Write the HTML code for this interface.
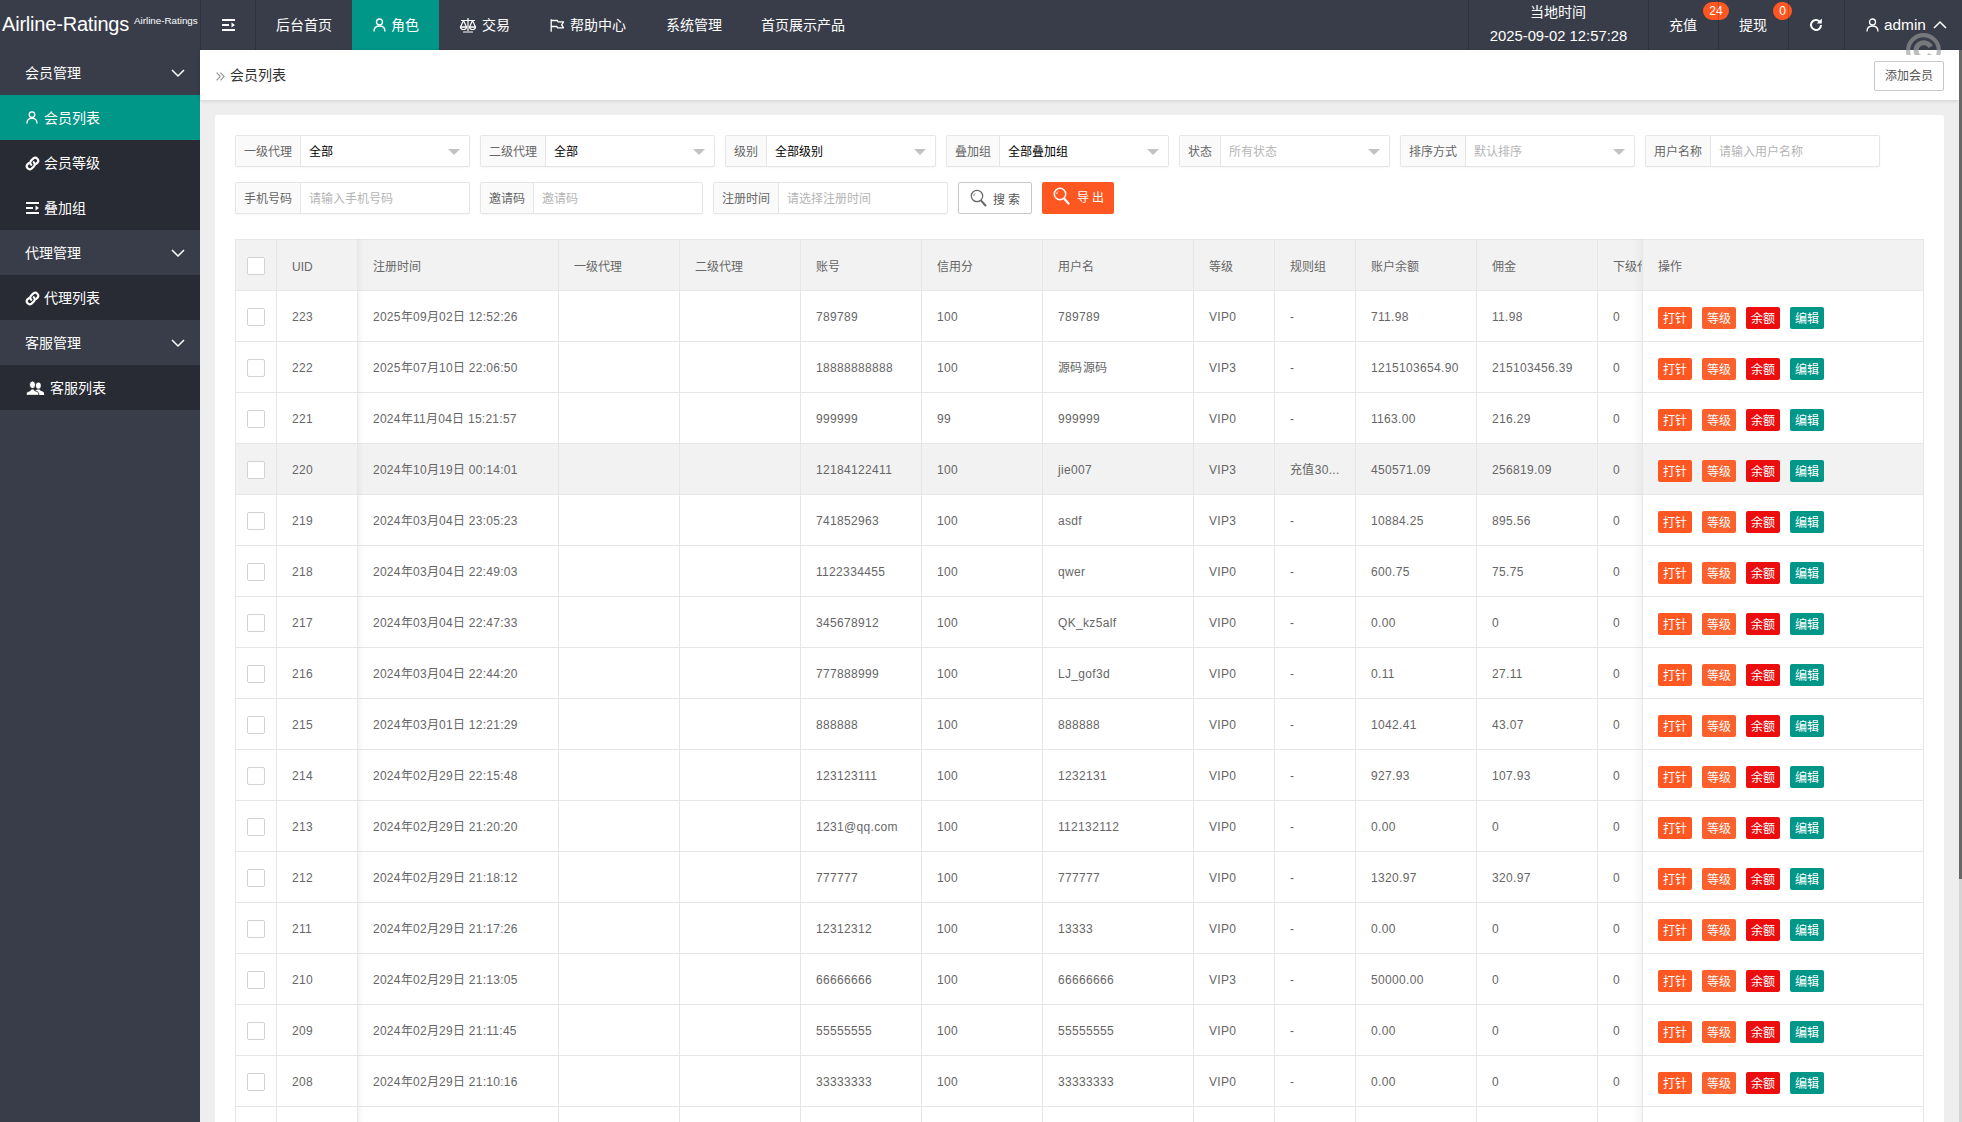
<!DOCTYPE html>
<html lang="zh-CN"><head><meta charset="utf-8"><title>会员列表</title>
<style>
*{box-sizing:border-box;margin:0;padding:0}
html,body{width:1962px;height:1122px;overflow:hidden}
body{font-family:"Liberation Sans",sans-serif;font-size:14px;color:#666;background:#eee;position:relative}
i{font-style:normal}
svg{display:block}
.abs{position:absolute}
/* header */
.hd{position:absolute;left:0;top:0;width:1962px;height:50px;background:#393D49;color:#fff}
.hd .sep{position:absolute;top:0;width:1px;height:50px;background:rgba(0,0,0,.17)}
.hd .t{position:absolute;top:0;height:50px;line-height:50px;white-space:nowrap;font-size:14px;color:#fff}
.logo{position:absolute;left:2px;top:0;height:50px;line-height:49px;font-size:20px;color:#fff;white-space:nowrap;letter-spacing:-.2px}
.logo2{position:absolute;left:134px;top:14px;font-size:9.8px;line-height:14px;color:#fff;white-space:nowrap}
.act{position:absolute;left:352px;top:0;width:87px;height:50px;background:#009688}
.badge{position:absolute;height:18px;line-height:18px;border-radius:9px;background:#FF5722;color:#fff;font-size:12px;text-align:center}
/* side */
.sd{position:absolute;left:0;top:50px;width:200px;height:1072px;background:#393D49}
.sd .it{position:absolute;left:0;width:200px;height:45px;line-height:47px;color:#fff;font-size:14px;white-space:nowrap}
.sd .ch{background:#282B33}
.sd .on{background:#009688}
.sd .it span{position:absolute;top:0}
.sd .it svg{position:absolute}
/* breadcrumb */
.bc{position:absolute;left:200px;top:50px;width:1759px;height:50px;background:#fff;box-shadow:0 1px 4px rgba(0,0,0,.12)}
.bc .tt{position:absolute;left:30px;top:0;line-height:50px;color:#333;font-size:14px}
.addb{position:absolute;left:1874px;top:61px;width:70px;height:30px;border:1px solid #C9C9C9;border-radius:2px;background:#fff;color:#555;font-size:12px;line-height:28px;text-align:center}
/* card */
.card{position:absolute;left:215px;top:115px;width:1729px;height:1010px;background:#fff;border-radius:2px}
.fi{position:absolute;height:32px;border:1px solid #e6e6e6;border-radius:2px;background:#fff;box-shadow:0 1px 2px rgba(0,0,0,.04)}
.fi .lb{position:absolute;left:0;top:0;height:30px;line-height:32px;background:#FAFAFA;border-right:1px solid #e6e6e6;color:#666;font-size:12px;text-align:center}
.fi .v{position:absolute;top:0;height:30px;line-height:32px;margin-left:-1px;font-size:12px;color:#000;white-space:nowrap}
.fi .ph{color:#b5b5b5}
.fi .ar{position:absolute;top:13px;width:0;height:0;border:6px solid transparent;border-top-color:#c2c2c2;border-bottom-width:0}
.btn{position:absolute;top:67px;height:32px;border-radius:2px;font-size:12px;line-height:30px;white-space:nowrap}
/* table */
.tbl{position:absolute;left:20px;top:124px;width:1690px;height:900px;overflow:hidden}
table.main{border-collapse:separate;border-spacing:0;table-layout:fixed;width:1689px;border-left:1px solid #e6e6e6;border-top:1px solid #e6e6e6}
table.main th,table.main td{border-right:1px solid #e6e6e6;border-bottom:1px solid #e6e6e6;height:51px;padding:0;text-align:left;font-weight:400;font-size:12px;color:#666;overflow:hidden;vertical-align:middle}
table.main th{background:#f2f2f2;height:51px}
tr.hov td{background:#f2f2f2}
.c{height:40px;line-height:42px;padding:0 15px;white-space:nowrap;overflow:hidden}
.c.nw{padding-right:0}
.ck{text-align:center}
.cb{display:block;width:18px;height:18px;border:1px solid #d2d2d2;border-radius:2px;background:#fff;margin:2px 0 0 11px}
.b{display:inline-block;height:22px;line-height:24px;overflow:hidden;padding:0 5px;border-radius:2px;color:#fff;font-size:12px;margin-right:10px;vertical-align:middle;position:relative;top:0}
.o1{background:#FF5722}.o2{background:#FC602C}.o3{background:#EC0E0E}.o4{background:#009688}
.shl{position:absolute;left:123px;top:0;width:6px;height:100%;background:linear-gradient(90deg,rgba(0,0,0,.035),rgba(0,0,0,0))}
.shr{position:absolute;left:1397px;top:0;width:10px;height:100%;background:linear-gradient(270deg,rgba(0,0,0,.032),rgba(0,0,0,0))}
/* scrollbar */
.sbar{position:absolute;left:1959px;top:50px;width:3px;height:1072px;background:#d4d4d4}
.sbar i{position:absolute;left:0;top:0;width:3px;height:829px;background:#676767}

tbody .c{letter-spacing:.33px}
tbody .op .c{letter-spacing:0}
tbody td:nth-child(3) .c{letter-spacing:.26px}
thead .c{line-height:44px}

</style></head>
<body>
<div class="hd">
<div class="logo">Airline-Ratings</div><div class="logo2">Airline-Ratings</div>
<div class="sep" style="left:200px"></div><div class="sep" style="left:255px"></div>
<div class="act"></div>
<svg class="abs" style="left:222px;top:19px" width="14" height="12" viewBox="0 0 14 12"><path d="M0 1h13M0 6h7M0 11h13" stroke="#fff" stroke-width="1.8" fill="none"/><path d="M9.5 3.5L13 6 9.5 8.5z" fill="#fff"/></svg>
<div class="t" style="left:276px">后台首页</div>
<svg class="abs" style="left:373px;top:18px" width="13" height="14" viewBox="0 0 13 14"><circle cx="6.5" cy="4" r="3" fill="none" stroke="#fff" stroke-width="1.4"/><path d="M1 13.5c0-4 2.5-5.5 5.5-5.5s5.500 1.500 5.500 5.500" fill="none" stroke="#fff" stroke-width="1.4"/></svg>
<div class="t" style="left:391px">角色</div>
<svg class="abs" style="left:459px;top:17px" width="18" height="16" viewBox="0 0 18 16"><path d="M9 1v13M4 15h10M2 3.500h14M4.500 3.500L1.500 10h6zM13.500 3.500L10.500 10h6z" fill="none" stroke="#fff" stroke-width="1.2" stroke-linejoin="round"/><path d="M1.500 10a3 2.500 0 0 0 6 0zM10.500 10a3 2.500 0 0 0 6 0z" fill="none" stroke="#fff" stroke-width="1.2"/></svg>
<div class="t" style="left:482px">交易</div>
<svg class="abs" style="left:550px;top:19px" width="15" height="13" viewBox="0 0 15 13"><path d="M1.200 .3v12.500M1.200 1.500h6l1 1.300h5.300l-1.800 3 1.800 3h-5.800l-1-1.300h-5.500" fill="none" stroke="#fff" stroke-width="1.300" stroke-linejoin="round"/></svg>
<div class="t" style="left:570px">帮助中心</div>
<div class="t" style="left:666px">系统管理</div>
<div class="t" style="left:761px">首页展示产品</div>
<div class="t" style="left:1468px;width:179px;text-align:center;top:1px;height:23px;line-height:23px">当地时间</div>
<div class="t" style="left:1469px;width:179px;text-align:center;top:25px;height:23px;line-height:23px;font-size:14.8px">2025-09-02 12:57:28</div>
<div class="t" style="left:1669px">充值</div>
<div class="badge" style="left:1703px;top:2px;width:26px">24</div>
<div class="t" style="left:1739px">提现</div>
<div class="badge" style="left:1773px;top:2px;width:19px">0</div>
<svg class="abs" style="left:1808px;top:17px" width="16" height="16" viewBox="0 0 16 16"><path d="M13 8a5 5 0 1 1-1.600-3.700" fill="none" stroke="#fff" stroke-width="2"/><path d="M13.800 1.500v5h-5z" fill="#fff"/></svg>
<svg class="abs" style="left:1866px;top:18px" width="13" height="14" viewBox="0 0 13 14"><circle cx="6.5" cy="4" r="3" fill="none" stroke="#fff" stroke-width="1.300"/><path d="M1 13.500c0-4 2.500-5.500 5.500-5.500s5.500 1.500 5.500 5.500" fill="none" stroke="#fff" stroke-width="1.300"/></svg>
<div class="t" style="left:1884px;font-size:15.400px">admin</div>
<svg class="abs" style="left:1933px;top:20px" width="14" height="9" viewBox="0 0 14 9"><path d="M1 8l6-6 6 6" fill="none" stroke="#fff" stroke-width="1.500"/></svg>
<div class="sep" style="left:1468px"></div><div class="sep" style="left:1648px"></div><div class="sep" style="left:1718px"></div><div class="sep" style="left:1788px"></div><div class="sep" style="left:1844px"></div>
</div>
<div class="sd">
<div class="it" style="top:0"><span style="left:25px">会员管理</span><svg style="left:171px;top:19px" width="14" height="9" viewBox="0 0 14 9"><path d="M1 1l6 6 6-6" fill="none" stroke="#fff" stroke-width="1.500"/></svg></div>
<div class="it on" style="top:45px"><svg style="left:26px;top:16px" width="12" height="13" viewBox="0 0 13 14"><circle cx="6.5" cy="4" r="3" fill="none" stroke="#fff" stroke-width="1.400"/><path d="M1 13.500c0-4 2.500-5.500 5.500-5.500s5.500 1.500 5.500 5.500" fill="none" stroke="#fff" stroke-width="1.400"/></svg><span style="left:44px">会员列表</span></div>
<div class="it ch" style="top:90px"><svg style="left:25px;top:16px" width="15" height="15" viewBox="0 0 15 15"><g fill="none" stroke="#fff" stroke-width="2.200" stroke-linecap="round"><path d="M6.200 8.800a3 3 0 0 1 0-4.200l2.200-2.200a3 3 0 0 1 4.200 4.200l-1.200 1.200"/><path d="M8.800 6.200a3 3 0 0 1 0 4.200l-2.200 2.200a3 3 0 0 1-4.200-4.200l1.200-1.200"/></g></svg><span style="left:44px">会员等级</span></div>
<div class="it ch" style="top:135px"><svg style="left:26px;top:17px" width="14" height="12" viewBox="0 0 14 12"><path d="M0 1h13M0 6h7M0 11h13" stroke="#fff" stroke-width="1.800" fill="none"/><path d="M9.500 3.500L13 6 9.500 8.500z" fill="#fff"/></svg><span style="left:44px">叠加组</span></div>
<div class="it" style="top:180px"><span style="left:25px">代理管理</span><svg style="left:171px;top:19px" width="14" height="9" viewBox="0 0 14 9"><path d="M1 1l6 6 6-6" fill="none" stroke="#fff" stroke-width="1.500"/></svg></div>
<div class="it ch" style="top:225px"><svg style="left:25px;top:16px" width="15" height="15" viewBox="0 0 15 15"><g fill="none" stroke="#fff" stroke-width="2.200" stroke-linecap="round"><path d="M6.200 8.800a3 3 0 0 1 0-4.200l2.200-2.200a3 3 0 0 1 4.200 4.200l-1.200 1.200"/><path d="M8.800 6.200a3 3 0 0 1 0 4.200l-2.200 2.200a3 3 0 0 1-4.200-4.200l1.200-1.200"/></g></svg><span style="left:44px">代理列表</span></div>
<div class="it" style="top:270px"><span style="left:25px">客服管理</span><svg style="left:171px;top:19px" width="14" height="9" viewBox="0 0 14 9"><path d="M1 1l6 6 6-6" fill="none" stroke="#fff" stroke-width="1.500"/></svg></div>
<div class="it ch" style="top:315px"><svg style="left:26px;top:16px" width="19" height="14" viewBox="0 0 19 14"><g fill="#fff"><ellipse cx="12.400" cy="4.600" rx="2.400" ry="3.200"/><path d="M9 14v-4l2-1.500h2.800c.2 1 .8 1.400 2.200 1.800 1.600.5 2.200 1.200 2.200 3.700z"/></g><g fill="#fff" stroke="#282B33" stroke-width=".9"><ellipse cx="6.500" cy="3.800" rx="3" ry="3.800"/><path d="M.2 14.300c0-2.800.7-3.500 2.700-4.100 1.500-.5 2.200-1 2.200-2.200h2.800c0 1.200.7 1.700 2.200 2.200 2 .6 2.700 1.300 2.700 4.100z"/></g></svg><span style="left:50px">客服列表</span></div>
</div>
<div class="bc"><svg class="abs" style="left:16px;top:22px" width="9" height="9" viewBox="0 0 9 9"><path d="M.7.700l3.500 3.800-3.500 3.800M4.500.700l3.500 3.800-3.500 3.800" fill="none" stroke="#8c8c8c" stroke-width="1.100"/></svg><div class="tt">会员列表</div></div>
<div class="addb">添加会员</div>
<svg class="abs" style="left:1903px;top:30px;z-index:9" width="42" height="25" viewBox="0 0 42 25"><g fill="none" stroke="#999" stroke-opacity=".64"><circle cx="20.500" cy="20.500" r="15.400" stroke-width="4.200"/><path d="M27.700 16.800a7.800 7.800 0 1 0 0 7.400" stroke-width="5"/></g></svg>
<div class="card">
<div class="fi" style="left:20px;top:20px;width:235px"><div class="lb" style="width:65px">一级代理</div><div class="v" style="left:74px">全部</div><i class="ar" style="left:212px"></i></div>
<div class="fi" style="left:265px;top:20px;width:235px"><div class="lb" style="width:65px">二级代理</div><div class="v" style="left:74px">全部</div><i class="ar" style="left:212px"></i></div>
<div class="fi" style="left:510px;top:20px;width:211px"><div class="lb" style="width:41px">级别</div><div class="v" style="left:50px">全部级别</div><i class="ar" style="left:188px"></i></div>
<div class="fi" style="left:731px;top:20px;width:223px"><div class="lb" style="width:53px">叠加组</div><div class="v" style="left:62px">全部叠加组</div><i class="ar" style="left:200px"></i></div>
<div class="fi" style="left:964px;top:20px;width:211px"><div class="lb" style="width:41px">状态</div><div class="v ph" style="left:50px">所有状态</div><i class="ar" style="left:188px"></i></div>
<div class="fi" style="left:1185px;top:20px;width:235px"><div class="lb" style="width:65px">排序方式</div><div class="v ph" style="left:74px">默认排序</div><i class="ar" style="left:212px"></i></div>
<div class="fi" style="left:1430px;top:20px;width:235px"><div class="lb" style="width:65px">用户名称</div><div class="v ph" style="left:74px">请输入用户名称</div></div>
<div class="fi" style="left:20px;top:67px;width:235px"><div class="lb" style="width:65px">手机号码</div><div class="v ph" style="left:74px">请输入手机号码</div></div>
<div class="fi" style="left:265px;top:67px;width:223px"><div class="lb" style="width:53px">邀请码</div><div class="v ph" style="left:62px">邀请码</div></div>
<div class="fi" style="left:498px;top:67px;width:235px"><div class="lb" style="width:65px">注册时间</div><div class="v ph" style="left:74px">请选择注册时间</div></div>
<div class="btn" style="left:743px;width:74px;border:1px solid #C9C9C9;background:#fff;color:#555"><svg class="abs" style="left:11px;top:6px" width="17" height="18" viewBox="0 0 17 18"><circle cx="7" cy="7" r="5.700" fill="none" stroke="#666" stroke-width="1.200"/><path d="M11.300 11.800l4.200 4.700" stroke="#666" stroke-width="2" stroke-linecap="round"/><path d="M3.800 7a3.200 3.200 0 0 1 1.500-2.700" fill="none" stroke="#666" stroke-width=".8"/></svg><span class="abs" style="left:34px;top:2px">搜 索</span></div>
<div class="btn" style="left:827px;width:72px;background:#FF5722;color:#fff;line-height:32px"><svg class="abs" style="left:11px;top:5px" width="17" height="18" viewBox="0 0 17 18"><circle cx="7" cy="7" r="5.700" fill="none" stroke="#fff" stroke-width="1.500"/><path d="M11.300 11.800l4.200 4.700" stroke="#fff" stroke-width="2.200" stroke-linecap="round"/><path d="M3.800 7a3.200 3.200 0 0 1 1.500-2.700" fill="none" stroke="#fff" stroke-width=".9"/></svg><span class="abs" style="left:35px;top:0">导 出</span></div>

<div class="tbl">
<table class="main"><colgroup><col style="width:41px"><col style="width:81px"><col style="width:201px"><col style="width:121px"><col style="width:121px"><col style="width:121px"><col style="width:121px"><col style="width:151px"><col style="width:81px"><col style="width:81px"><col style="width:121px"><col style="width:121px"><col style="width:45px"><col style="width:281px"></colgroup>
<thead><tr><th class="ck"><i class="cb"></i></th><th><div class="c">UID</div></th><th><div class="c">注册时间</div></th><th><div class="c">一级代理</div></th><th><div class="c">二级代理</div></th><th><div class="c">账号</div></th><th><div class="c">信用分</div></th><th><div class="c">用户名</div></th><th><div class="c">等级</div></th><th><div class="c">规则组</div></th><th><div class="c">账户余额</div></th><th><div class="c">佣金</div></th><th><div class="c nw">下级代理</div></th><th class="op"><div class="c">操作</div></th></tr></thead><tbody>
<tr><td class="ck"><i class="cb"></i></td><td><div class="c">223</div></td><td><div class="c">2025年09月02日 12:52:26</div></td><td></td><td></td><td><div class="c">789789</div></td><td><div class="c">100</div></td><td><div class="c">789789</div></td><td><div class="c">VIP0</div></td><td><div class="c">-</div></td><td><div class="c">711.98</div></td><td><div class="c">11.98</div></td><td><div class="c">0</div></td><td class="op"><div class="c"><a class="b o1">打针</a><a class="b o2">等级</a><a class="b o3">余额</a><a class="b o4">编辑</a></div></td></tr>
<tr><td class="ck"><i class="cb"></i></td><td><div class="c">222</div></td><td><div class="c">2025年07月10日 22:06:50</div></td><td></td><td></td><td><div class="c">18888888888</div></td><td><div class="c">100</div></td><td><div class="c">源码源码</div></td><td><div class="c">VIP3</div></td><td><div class="c">-</div></td><td><div class="c">1215103654.90</div></td><td><div class="c">215103456.39</div></td><td><div class="c">0</div></td><td class="op"><div class="c"><a class="b o1">打针</a><a class="b o2">等级</a><a class="b o3">余额</a><a class="b o4">编辑</a></div></td></tr>
<tr><td class="ck"><i class="cb"></i></td><td><div class="c">221</div></td><td><div class="c">2024年11月04日 15:21:57</div></td><td></td><td></td><td><div class="c">999999</div></td><td><div class="c">99</div></td><td><div class="c">999999</div></td><td><div class="c">VIP0</div></td><td><div class="c">-</div></td><td><div class="c">1163.00</div></td><td><div class="c">216.29</div></td><td><div class="c">0</div></td><td class="op"><div class="c"><a class="b o1">打针</a><a class="b o2">等级</a><a class="b o3">余额</a><a class="b o4">编辑</a></div></td></tr>
<tr class="hov"><td class="ck"><i class="cb"></i></td><td><div class="c">220</div></td><td><div class="c">2024年10月19日 00:14:01</div></td><td></td><td></td><td><div class="c">12184122411</div></td><td><div class="c">100</div></td><td><div class="c">jie007</div></td><td><div class="c">VIP3</div></td><td><div class="c">充值30...</div></td><td><div class="c">450571.09</div></td><td><div class="c">256819.09</div></td><td><div class="c">0</div></td><td class="op"><div class="c"><a class="b o1">打针</a><a class="b o2">等级</a><a class="b o3">余额</a><a class="b o4">编辑</a></div></td></tr>
<tr><td class="ck"><i class="cb"></i></td><td><div class="c">219</div></td><td><div class="c">2024年03月04日 23:05:23</div></td><td></td><td></td><td><div class="c">741852963</div></td><td><div class="c">100</div></td><td><div class="c">asdf</div></td><td><div class="c">VIP3</div></td><td><div class="c">-</div></td><td><div class="c">10884.25</div></td><td><div class="c">895.56</div></td><td><div class="c">0</div></td><td class="op"><div class="c"><a class="b o1">打针</a><a class="b o2">等级</a><a class="b o3">余额</a><a class="b o4">编辑</a></div></td></tr>
<tr><td class="ck"><i class="cb"></i></td><td><div class="c">218</div></td><td><div class="c">2024年03月04日 22:49:03</div></td><td></td><td></td><td><div class="c">1122334455</div></td><td><div class="c">100</div></td><td><div class="c">qwer</div></td><td><div class="c">VIP0</div></td><td><div class="c">-</div></td><td><div class="c">600.75</div></td><td><div class="c">75.75</div></td><td><div class="c">0</div></td><td class="op"><div class="c"><a class="b o1">打针</a><a class="b o2">等级</a><a class="b o3">余额</a><a class="b o4">编辑</a></div></td></tr>
<tr><td class="ck"><i class="cb"></i></td><td><div class="c">217</div></td><td><div class="c">2024年03月04日 22:47:33</div></td><td></td><td></td><td><div class="c">345678912</div></td><td><div class="c">100</div></td><td><div class="c">QK_kz5alf</div></td><td><div class="c">VIP0</div></td><td><div class="c">-</div></td><td><div class="c">0.00</div></td><td><div class="c">0</div></td><td><div class="c">0</div></td><td class="op"><div class="c"><a class="b o1">打针</a><a class="b o2">等级</a><a class="b o3">余额</a><a class="b o4">编辑</a></div></td></tr>
<tr><td class="ck"><i class="cb"></i></td><td><div class="c">216</div></td><td><div class="c">2024年03月04日 22:44:20</div></td><td></td><td></td><td><div class="c">777888999</div></td><td><div class="c">100</div></td><td><div class="c">LJ_gof3d</div></td><td><div class="c">VIP0</div></td><td><div class="c">-</div></td><td><div class="c">0.11</div></td><td><div class="c">27.11</div></td><td><div class="c">0</div></td><td class="op"><div class="c"><a class="b o1">打针</a><a class="b o2">等级</a><a class="b o3">余额</a><a class="b o4">编辑</a></div></td></tr>
<tr><td class="ck"><i class="cb"></i></td><td><div class="c">215</div></td><td><div class="c">2024年03月01日 12:21:29</div></td><td></td><td></td><td><div class="c">888888</div></td><td><div class="c">100</div></td><td><div class="c">888888</div></td><td><div class="c">VIP0</div></td><td><div class="c">-</div></td><td><div class="c">1042.41</div></td><td><div class="c">43.07</div></td><td><div class="c">0</div></td><td class="op"><div class="c"><a class="b o1">打针</a><a class="b o2">等级</a><a class="b o3">余额</a><a class="b o4">编辑</a></div></td></tr>
<tr><td class="ck"><i class="cb"></i></td><td><div class="c">214</div></td><td><div class="c">2024年02月29日 22:15:48</div></td><td></td><td></td><td><div class="c">123123111</div></td><td><div class="c">100</div></td><td><div class="c">1232131</div></td><td><div class="c">VIP0</div></td><td><div class="c">-</div></td><td><div class="c">927.93</div></td><td><div class="c">107.93</div></td><td><div class="c">0</div></td><td class="op"><div class="c"><a class="b o1">打针</a><a class="b o2">等级</a><a class="b o3">余额</a><a class="b o4">编辑</a></div></td></tr>
<tr><td class="ck"><i class="cb"></i></td><td><div class="c">213</div></td><td><div class="c">2024年02月29日 21:20:20</div></td><td></td><td></td><td><div class="c">1231@qq.com</div></td><td><div class="c">100</div></td><td><div class="c">112132112</div></td><td><div class="c">VIP0</div></td><td><div class="c">-</div></td><td><div class="c">0.00</div></td><td><div class="c">0</div></td><td><div class="c">0</div></td><td class="op"><div class="c"><a class="b o1">打针</a><a class="b o2">等级</a><a class="b o3">余额</a><a class="b o4">编辑</a></div></td></tr>
<tr><td class="ck"><i class="cb"></i></td><td><div class="c">212</div></td><td><div class="c">2024年02月29日 21:18:12</div></td><td></td><td></td><td><div class="c">777777</div></td><td><div class="c">100</div></td><td><div class="c">777777</div></td><td><div class="c">VIP0</div></td><td><div class="c">-</div></td><td><div class="c">1320.97</div></td><td><div class="c">320.97</div></td><td><div class="c">0</div></td><td class="op"><div class="c"><a class="b o1">打针</a><a class="b o2">等级</a><a class="b o3">余额</a><a class="b o4">编辑</a></div></td></tr>
<tr><td class="ck"><i class="cb"></i></td><td><div class="c">211</div></td><td><div class="c">2024年02月29日 21:17:26</div></td><td></td><td></td><td><div class="c">12312312</div></td><td><div class="c">100</div></td><td><div class="c">13333</div></td><td><div class="c">VIP0</div></td><td><div class="c">-</div></td><td><div class="c">0.00</div></td><td><div class="c">0</div></td><td><div class="c">0</div></td><td class="op"><div class="c"><a class="b o1">打针</a><a class="b o2">等级</a><a class="b o3">余额</a><a class="b o4">编辑</a></div></td></tr>
<tr><td class="ck"><i class="cb"></i></td><td><div class="c">210</div></td><td><div class="c">2024年02月29日 21:13:05</div></td><td></td><td></td><td><div class="c">66666666</div></td><td><div class="c">100</div></td><td><div class="c">66666666</div></td><td><div class="c">VIP3</div></td><td><div class="c">-</div></td><td><div class="c">50000.00</div></td><td><div class="c">0</div></td><td><div class="c">0</div></td><td class="op"><div class="c"><a class="b o1">打针</a><a class="b o2">等级</a><a class="b o3">余额</a><a class="b o4">编辑</a></div></td></tr>
<tr><td class="ck"><i class="cb"></i></td><td><div class="c">209</div></td><td><div class="c">2024年02月29日 21:11:45</div></td><td></td><td></td><td><div class="c">55555555</div></td><td><div class="c">100</div></td><td><div class="c">55555555</div></td><td><div class="c">VIP0</div></td><td><div class="c">-</div></td><td><div class="c">0.00</div></td><td><div class="c">0</div></td><td><div class="c">0</div></td><td class="op"><div class="c"><a class="b o1">打针</a><a class="b o2">等级</a><a class="b o3">余额</a><a class="b o4">编辑</a></div></td></tr>
<tr><td class="ck"><i class="cb"></i></td><td><div class="c">208</div></td><td><div class="c">2024年02月29日 21:10:16</div></td><td></td><td></td><td><div class="c">33333333</div></td><td><div class="c">100</div></td><td><div class="c">33333333</div></td><td><div class="c">VIP0</div></td><td><div class="c">-</div></td><td><div class="c">0.00</div></td><td><div class="c">0</div></td><td><div class="c">0</div></td><td class="op"><div class="c"><a class="b o1">打针</a><a class="b o2">等级</a><a class="b o3">余额</a><a class="b o4">编辑</a></div></td></tr>
<tr><td class="ck"><i class="cb"></i></td><td></td><td></td><td></td><td></td><td></td><td></td><td></td><td></td><td></td><td></td><td></td><td></td><td class="op"></td></tr>
</tbody></table>
<div class="shl"></div><div class="shr"></div>
</div>
</div>
<div class="sbar"><i></i></div>
</body></html>
